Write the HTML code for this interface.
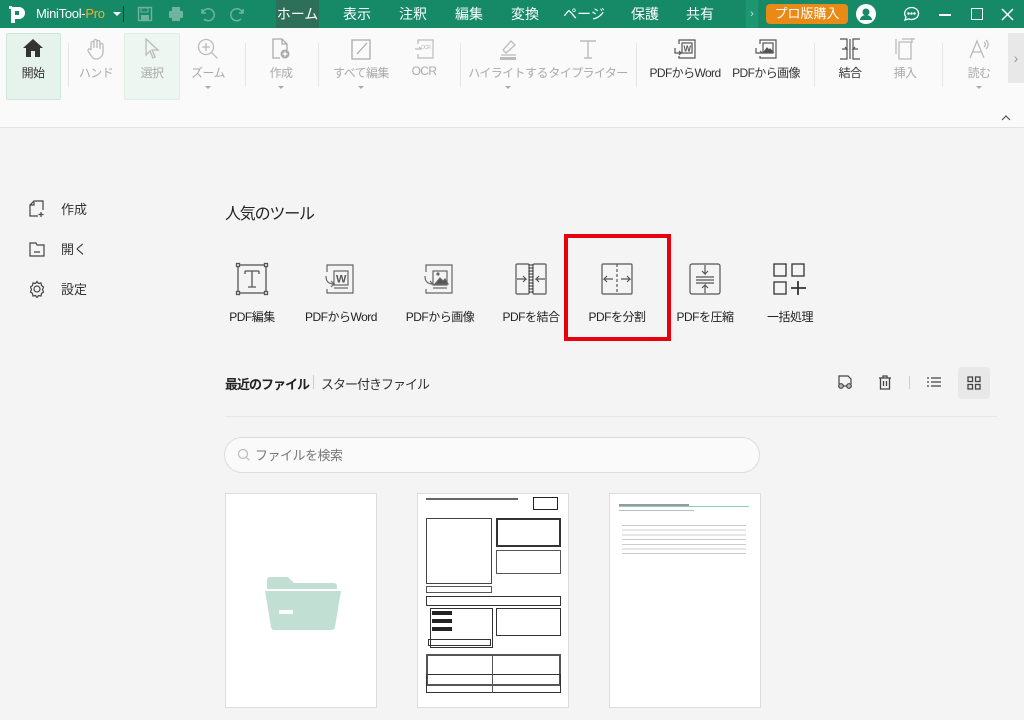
<!DOCTYPE html>
<html><head><meta charset="utf-8"><style>
*{margin:0;padding:0;box-sizing:border-box}
body{width:1024px;height:720px;overflow:hidden;background:#f4f4f4;font-family:"Liberation Sans","Noto Sans CJK JP",sans-serif;position:relative;color:#333}
.a{position:absolute}
#title{left:0;top:0;width:1024px;height:28px;background:#168966;color:#fff}
.tab{position:absolute;top:0;height:28px;line-height:28px;font-size:14px;color:#fff;text-align:center}
#tb{left:0;top:28px;width:1024px;height:100px;background:#fafafa;border-bottom:1px solid #e2e2e2}
.it{position:absolute;top:0;text-align:center;font-size:12px;letter-spacing:-0.6px;color:#aaa;white-space:nowrap}
.it .lb{position:absolute;top:36px;left:50%;transform:translateX(-50%)}
.it.on .lb{color:#333}
.ic{position:absolute;top:10px;left:50%;transform:translateX(-50%)}
.dd{position:absolute;top:58px;left:50%;margin-left:-3px;border-left:3px solid transparent;border-right:3px solid transparent;border-top:3px solid #aaa}
.sep{position:absolute;top:15px;width:1px;height:44px;background:#e6e6e6}
.tool{position:absolute;top:262px;text-align:center;font-size:12px;letter-spacing:-0.5px;color:#222;white-space:nowrap}
.tool span{position:absolute;top:46px;left:50%;transform:translateX(-50%)}
.tool svg{position:absolute;left:50%;transform:translateX(-50%);top:0}
.side{position:absolute;left:28px;font-size:13px;color:#333}
.side span{position:absolute;left:33px;top:-1px;white-space:nowrap}
.thumb{position:absolute;top:493px;width:152px;height:215px;background:#fff;border:1px solid #ddd}
</style></head><body>
<div id="title" class="a">
 <svg class="a" style="left:8px;top:5px" width="20" height="20"><path d="M3 2h8a6 6 0 0 1 0 12H7v4H3z" fill="#fff"/><rect x="7" y="6" width="4" height="4" fill="#168966"/><rect x="1" y="1" width="3" height="3" fill="#fff"/></svg>
 <div class="a" style="left:36px;top:6px;font-size:13px;letter-spacing:-0.3px">MiniTool-<span style="color:#f0b030">Pro</span></div>
 <div class="a" style="left:113px;top:12px;border-left:4px solid transparent;border-right:4px solid transparent;border-top:4px solid #fff"></div>
 <div class="a" style="left:123px;top:6px;width:1px;height:16px;background:#0b3b2c"></div>
 <svg class="a" style="left:137px;top:6px" width="16" height="16"><rect x="1.5" y="1.5" width="13" height="13" fill="none" stroke="#6fb59d" stroke-width="1.4"/><rect x="4" y="2" width="7" height="4" fill="none" stroke="#6fb59d"/><rect x="4" y="9" width="8" height="5" fill="#6fb59d"/></svg>
 <svg class="a" style="left:168px;top:6px" width="16" height="16"><rect x="4" y="1" width="8" height="4" fill="#6fb59d"/><rect x="1" y="5" width="14" height="7" rx="1" fill="#6fb59d"/><rect x="4" y="10" width="8" height="5" fill="#6fb59d"/></svg>
 <svg class="a" style="left:199px;top:6px" width="16" height="16" fill="none" stroke="#6fb59d" stroke-width="1.5"><path d="M3 3v4h4M3.5 7A6 6 0 1 1 5 13"/></svg>
 <svg class="a" style="left:230px;top:6px" width="16" height="16" fill="none" stroke="#6fb59d" stroke-width="1.5"><path d="M13 3v4H9M12.5 7A6 6 0 1 0 11 13"/></svg>
 <div class="tab" style="left:276px;width:43px;background:#2d6f58">ホーム</div>
 <div class="tab" style="left:340px;width:34px">表示</div>
 <div class="tab" style="left:396px;width:34px">注釈</div>
 <div class="tab" style="left:452px;width:34px">編集</div>
 <div class="tab" style="left:508px;width:34px">変換</div>
 <div class="tab" style="left:562px;width:44px">ページ</div>
 <div class="tab" style="left:628px;width:34px">保護</div>
 <div class="tab" style="left:683px;width:34px">共有</div>
 <div class="a" style="left:746px;top:0;width:12px;height:28px;background:#1e9670;text-align:center;line-height:28px;font-size:11px;color:#cde">›</div>
 <div class="a" style="left:766px;top:4px;width:82px;height:20px;background:#e98a17;border-radius:4px;text-align:center;line-height:20px;font-size:13px">プロ版購入</div>
 <svg class="a" style="left:856px;top:4px" width="20" height="20"><circle cx="10" cy="10" r="10" fill="#fff"/><circle cx="10" cy="8" r="3.5" fill="#168966"/><path d="M4 16a6 5 0 0 1 12 0z" fill="#168966"/></svg>
 <svg class="a" style="left:903px;top:6px" width="17" height="16" fill="none" stroke="#fff" stroke-width="1.3"><path d="M8.5 1.5a7 6 0 1 1-3 11.4L2 14l1-3A7 6 0 0 1 8.5 1.5z"/><circle cx="5.5" cy="7.5" r=".6" fill="#fff"/><circle cx="8.5" cy="7.5" r=".6" fill="#fff"/><circle cx="11.5" cy="7.5" r=".6" fill="#fff"/></svg>
 <div class="a" style="left:939px;top:14px;width:12px;height:1.5px;background:#fff"></div>
 <div class="a" style="left:971px;top:8px;width:12px;height:12px;border:1.5px solid #fff"></div>
 <svg class="a" style="left:1001px;top:8px" width="13" height="13" stroke="#fff" stroke-width="1.5"><path d="M1 1l11 11M12 1L1 12"/></svg>
</div>

<div id="tb" class="a">
 <div class="a" style="left:6px;top:5px;width:55px;height:67px;background:#e6f3ec;border:1px solid #cfe7db;border-radius:2px"></div>
 <div class="a" style="left:124px;top:5px;width:56px;height:67px;background:#eef6f1;border:1px solid #dcefe4;border-radius:2px"></div>
 <div class="it on" style="left:33px"><svg class="ic" width="22" height="20"><path d="M11 1L1 10h3v9h5v-6h4v6h5v-9h3z" fill="#333"/></svg><span class="lb">開始</span></div>
 <div class="it" style="left:96px"><svg class="ic" width="20" height="22" fill="none" stroke="#bbb" stroke-width="1.3"><path d="M5 12V5a1.5 1.5 0 0 1 3 0v5V3a1.5 1.5 0 0 1 3 0v7V4a1.5 1.5 0 0 1 3 0v7V7a1.5 1.5 0 0 1 3 0v7a7 7 0 0 1-7 7c-3 0-4-2-6-5l-2-3a1.5 1.5 0 0 1 3-1z"/></svg><span class="lb">ハンド</span></div>
 <div class="it" style="left:152px"><svg class="ic" width="16" height="22" fill="none" stroke="#bbb" stroke-width="1.3"><path d="M2 1v16l4-4 3 7 2-1-3-7h6z"/></svg><span class="lb">選択</span></div>
 <div class="it" style="left:208px"><svg class="ic" width="22" height="22" fill="none" stroke="#bbb" stroke-width="1.3"><circle cx="9" cy="9" r="7.5"/><path d="M9 5v8M5 9h8M14.5 14.5l6 6"/></svg><span class="lb">ズーム</span><i class="dd"></i></div>
 <div class="sep" style="left:68px"></div>
 <div class="sep" style="left:245px"></div>
 <div class="it" style="left:281px"><svg class="ic" width="20" height="22" fill="none" stroke="#aaa" stroke-width="1.3"><path d="M9 20H2V1h9l5 5v6M11 1v5h5"/><circle cx="14" cy="16" r="4.5" fill="#aaa" stroke="none"/><path d="M14 13.5v5M11.5 16h5" stroke="#fff"/></svg><span class="lb">作成</span><i class="dd"></i></div>
 <div class="sep" style="left:318px"></div>
 <div class="it" style="left:361px"><svg class="ic" width="22" height="22" fill="none" stroke="#aaa" stroke-width="1.3"><path d="M2 2h18v19H2zM7 16L17 5"/></svg><span class="lb">すべて編集</span><i class="dd"></i></div>
 <div class="it" style="left:424px"><svg class="ic" width="22" height="22" fill="none" stroke="#bbb" stroke-width="1.2"><path d="M5 6V2h15v18H5v-4M2 11h6l-2-2"/><text x="8" y="11" font-size="5" fill="#bbb" stroke="none">OCR</text></svg><span class="lb">OCR</span></div>
 <div class="sep" style="left:460px"></div>
 <div class="it" style="left:508px"><svg class="ic" width="22" height="22" fill="none" stroke="#bbb" stroke-width="1.3"><path d="M6 12l8-9 4 4-9 8zM4 17h15"/><rect x="3" y="19" width="16" height="3" fill="#bbb" stroke="none"/></svg><span class="lb">ハイライトする</span><i class="dd"></i></div>
 <div class="it" style="left:588px"><svg class="ic" width="20" height="22" fill="none" stroke="#bbb" stroke-width="1.4"><path d="M2 3h16M10 3v17M6 20h8"/></svg><span class="lb">タイプライター</span></div>
 <div class="sep" style="left:636px"></div>
 <div class="it on" style="left:685px"><svg class="ic" width="22" height="22" fill="none" stroke="#555" stroke-width="1.2"><path d="M5 6V2h16v18H5v-2"/><rect x="8" y="5" width="10" height="10"/><path d="M1 10v5h6l-2-2M7 15l-2 2"/><text x="9.5" y="13.5" font-size="8" font-weight="bold" fill="#555" stroke="none">W</text></svg><span class="lb">PDFからWord</span></div>
 <div class="it on" style="left:766px"><svg class="ic" width="22" height="22" fill="none" stroke="#555" stroke-width="1.2"><path d="M5 6V2h16v18H5v-2"/><rect x="8" y="5" width="10" height="10"/><path d="M1 10v5h6l-2-2"/><path d="M9 14l3-4 2 2 1-1 3 3z" fill="#555"/></svg><span class="lb">PDFから画像</span></div>
 <div class="sep" style="left:814px"></div>
 <div class="it on" style="left:850px"><svg class="ic" width="22" height="22" fill="none" stroke="#555" stroke-width="1.2"><path d="M1 1h7v20H1M21 1h-7v20h7M11 1v20" /><path d="M3 11h5l-2-2M19 11h-5l2-2"/></svg><span class="lb">結合</span></div>
 <div class="it" style="left:905px"><svg class="ic" width="20" height="22" fill="none" stroke="#bbb" stroke-width="1.3"><path d="M4 4h12v17H4zM1 1v15M7 1h13M17 0v5"/></svg><span class="lb">挿入</span></div>
 <div class="sep" style="left:942px"></div>
 <div class="it" style="left:979px"><svg class="ic" width="22" height="22" fill="none" stroke="#bbb" stroke-width="1.3"><path d="M2 20L9 3l7 17M5 14h8M16 4a3 3 0 0 1 0 5M18 2a6 6 0 0 1 0 9"/></svg><span class="lb">読む</span><i class="dd"></i></div>
 <div class="a" style="left:1008px;top:5px;width:16px;height:50px;background:#e8e8e8;text-align:center;line-height:50px;color:#999;font-size:14px">›</div>
 <svg class="a" style="left:1000px;top:86px" width="12" height="8" fill="none" stroke="#555" stroke-width="1.2"><path d="M2 6l4-4 4 4"/></svg>
</div>

<div class="side" style="top:200px"><svg width="18" height="18" fill="none" stroke="#444" stroke-width="1.2"><path d="M7 1h8v9M10 16H2V5l4-4v4H2"/><path d="M13 12v5M10.5 14.5h5"/></svg><span>作成</span></div>
<div class="side" style="top:240px"><svg width="18" height="18" fill="none" stroke="#444" stroke-width="1.2"><path d="M2 3h6l1 2h7v11H2zM6 12h6"/></svg><span>開く</span></div>
<div class="side" style="top:280px"><svg width="18" height="18" fill="none" stroke="#444" stroke-width="1.2"><circle cx="9" cy="9" r="3"/><path d="M9 1.5l1.5 2 2.5-.5.5 2.5 2 1.5-1 2.5 1 2.5-2 1.5-.5 2.5-2.5-.5-1.5 2-1.5-2-2.5.5-.5-2.5-2-1.5 1-2.5-1-2.5 2-1.5.5-2.5 2.5.5z"/></svg><span>設定</span></div>

<div class="a" style="left:225px;top:200px;font-size:16px;letter-spacing:-1.2px;color:#222">人気のツール</div>

<div class="tool" style="left:252px"><svg width="34" height="34" fill="none" stroke="#555" stroke-width="1.3"><rect x="3" y="3" width="28" height="28"/><rect x="1.5" y="1.5" width="3" height="3" fill="#fff"/><rect x="29.5" y="1.5" width="3" height="3" fill="#fff"/><rect x="1.5" y="29.5" width="3" height="3" fill="#fff"/><rect x="29.5" y="29.5" width="3" height="3" fill="#fff"/><path d="M10 9h14M10 9v3M24 9v3M17 9v16M13 25h8"/></svg><span>PDF編集</span></div>
<div class="tool" style="left:341px"><svg width="34" height="34" fill="none" stroke="#666" stroke-width="1.2"><path d="M3 10V3h26v28H3v-4"/><rect x="10" y="9" width="14" height="14"/><path d="M10 26h14"/><path d="M2 14c0 6 3 8 8 8l-3-3M10 22l-3 3"/><text x="12" y="20.5" font-size="11" font-weight="bold" fill="#555" stroke="none">W</text></svg><span>PDFからWord</span></div>
<div class="tool" style="left:440px"><svg width="34" height="34" fill="none" stroke="#666" stroke-width="1.2"><path d="M3 10V3h26v28H3v-4"/><rect x="10" y="9" width="14" height="14"/><path d="M10 26h14"/><path d="M2 14c0 6 3 8 8 8l-3-3"/><path d="M12 22l5-6 3 3 2-2 3 5z" fill="#555"/><circle cx="15" cy="12" r="1" fill="#555"/></svg><span>PDFから画像</span></div>
<div class="tool" style="left:531px"><svg width="34" height="34" fill="none" stroke="#555" stroke-width="1.2"><rect x="2" y="2" width="13" height="30" rx="1"/><rect x="19" y="2" width="13" height="30" rx="1"/><path d="M16 2v30M18 2v30" stroke-dasharray="2 1"/><path d="M3 17h9l-3-3M12 17l-3 3M31 17h-9l3-3M22 17l3 3"/></svg><span>PDFを結合</span></div>
<div class="tool" style="left:617px"><svg width="34" height="34" fill="none" stroke="#555" stroke-width="1.2"><rect x="2" y="2" width="30" height="30" rx="1"/><path d="M17 2v30" stroke-dasharray="3 2"/><path d="M13 17H4l3-3M4 17l3 3M21 17h9l-3-3M30 17l-3 3"/></svg><span>PDFを分割</span></div>
<div class="a" style="left:564px;top:234px;width:107px;height:107px;border:4px solid #e8000f"></div>
<div class="tool" style="left:705px"><svg width="34" height="34" fill="none" stroke="#555" stroke-width="1.2"><rect x="2" y="2" width="30" height="30" rx="2"/><path d="M17 3v9l-3-3M17 12l3-3M17 31v-8l-3 3M17 23l3 3M8 15h18M8 18h18M8 21h18"/></svg><span>PDFを圧縮</span></div>
<div class="tool" style="left:790px"><svg width="36" height="34" fill="none" stroke="#333" stroke-width="1.3"><rect x="2" y="2" width="12" height="12"/><rect x="20" y="2" width="12" height="12"/><rect x="2" y="20" width="12" height="12"/><path d="M26 19v14M19 26h15" stroke-width="1.8"/></svg><span>一括処理</span></div>

<div class="a" style="left:225px;top:374px;font-size:13px;font-weight:bold;letter-spacing:-1px;color:#222">最近のファイル</div>
<div class="a" style="left:313px;top:375px;width:1px;height:14px;background:#ccc"></div>
<div class="a" style="left:321px;top:374px;font-size:13px;letter-spacing:-1px;color:#333">スター付きファイル</div>
<svg class="a" style="left:837px;top:375px" width="16" height="14" fill="none" stroke="#444" stroke-width="1.2"><path d="M2 9V1h9l3 3v5"/><circle cx="4" cy="11" r="2.3" fill="#bbb"/><circle cx="12" cy="11" r="2.3" fill="#bbb"/><path d="M6 11h4"/></svg>
<svg class="a" style="left:878px;top:375px" width="14" height="15" fill="none" stroke="#444" stroke-width="1.3"><path d="M1 3h12M5 3V1h4v2M2.5 3v11h9V3M5.5 6v5M8.5 6v5"/></svg>
<div class="a" style="left:909px;top:376px;width:1px;height:13px;background:#ccc"></div>
<svg class="a" style="left:927px;top:376px" width="14" height="12" stroke="#444" stroke-width="1.2"><path d="M0 2h2M4 2h10M0 6h2M4 6h10M0 10h2M4 10h10"/></svg>
<div class="a" style="left:958px;top:367px;width:32px;height:32px;background:#e8e8e8;border-radius:4px"></div>
<svg class="a" style="left:967px;top:376px" width="14" height="14" fill="none" stroke="#444" stroke-width="1.3"><rect x="1" y="1" width="4.5" height="4.5"/><rect x="8.5" y="1" width="4.5" height="4.5"/><rect x="1" y="8.5" width="4.5" height="4.5"/><rect x="8.5" y="8.5" width="4.5" height="4.5"/></svg>
<div class="a" style="left:225px;top:416px;width:772px;height:1px;background:#e6e6e6"></div>

<div class="a" style="left:224px;top:437px;width:536px;height:36px;border:1px solid #dcdcdc;border-radius:18px;background:#fafafa"></div>
<svg class="a" style="left:237px;top:448px" width="14" height="14" fill="none" stroke="#bbb" stroke-width="1.2"><circle cx="6" cy="6" r="4.5"/><path d="M9.5 9.5l3 3"/></svg>
<div class="a" style="left:255px;top:445px;font-size:13px;letter-spacing:-0.5px;color:#777">ファイルを検索</div>

<div class="thumb" style="left:225px"><svg class="a" style="left:39px;top:78px" width="76" height="58"><path d="M2 8a3 3 0 0 1 3-3h18l6 6h40a3 3 0 0 1 3 3v3H2z" fill="#c2dfd4"/><path d="M0 19h76l-6 36a3 3 0 0 1-3 3H9a3 3 0 0 1-3-3z" fill="#c2dfd4"/><rect x="14" y="38" width="14" height="4" fill="#fff"/></svg></div>
<div class="thumb" style="left:417px">
 <div class="a" style="left:8px;top:4px;width:92px;height:2px;background:#666"></div>
 <div class="a" style="left:115px;top:3px;width:25px;height:13px;border:1px solid #222"></div>
 <div class="a" style="left:8px;top:24px;width:66px;height:66px;border:1px solid #444"></div>
 <div class="a" style="left:78px;top:24px;width:65px;height:29px;border:2px solid #333"></div>
 <div class="a" style="left:78px;top:56px;width:65px;height:24px;border:1px solid #555"></div>
 <div class="a" style="left:8px;top:92px;width:66px;height:7px;border:1px solid #555"></div>
 <div class="a" style="left:8px;top:102px;width:135px;height:10px;border:1px solid #333"></div>
 <div class="a" style="left:12px;top:114px;width:63px;height:40px;border:1px solid #333"></div>
 <div class="a" style="left:14px;top:117px;width:20px;height:4px;background:#222"></div>
 <div class="a" style="left:14px;top:125px;width:20px;height:4px;background:#222"></div>
 <div class="a" style="left:14px;top:133px;width:20px;height:4px;background:#222"></div>
 <div class="a" style="left:78px;top:114px;width:65px;height:28px;border:1px solid #333"></div>
 <div class="a" style="left:10px;top:145px;width:63px;height:7px;border:1px solid #333"></div>
 <div class="a" style="left:8px;top:160px;width:135px;height:32px;border:2px solid #555"></div>
 <div class="a" style="left:8px;top:180px;width:135px;height:19px;border:1px solid #333"></div>
 <div class="a" style="left:74px;top:160px;width:1px;height:39px;background:#555"></div>
</div>
<div class="thumb" style="left:609px">
 <div class="a" style="left:9px;top:12px;width:130px;height:1px;background:#8cc;"></div>
 <div class="a" style="left:9px;top:10px;width:70px;height:2px;background:#999"></div>
 <div class="a" style="left:9px;top:16px;width:75px;height:1px;background:#bbb"></div>
 <div class="a" style="left:12px;top:28px;width:124px;height:33px;background:repeating-linear-gradient(#fff 0 3px,#ccc 3px 4px,#fff 4px 4.7px)"></div>
</div>
</body></html>
